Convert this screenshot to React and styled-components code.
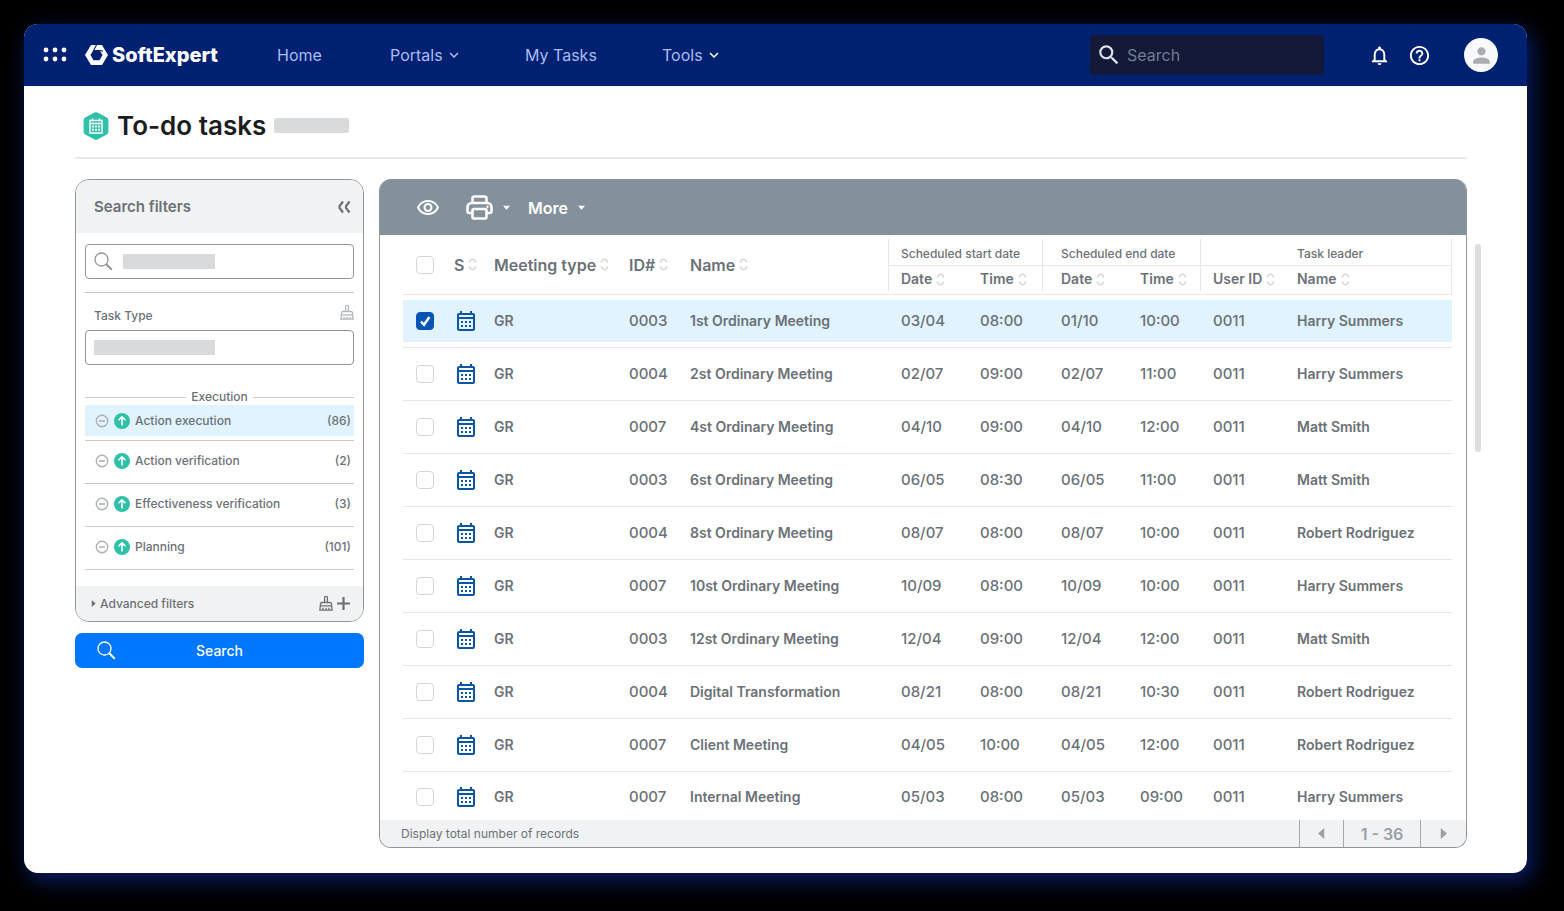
import React from "react";
import styled, { createGlobalStyle, css } from "styled-components";
import {
  MdOutlineCalendarMonth,
  MdOutlineNotifications,
  MdHelpOutline,
  MdSearch,
  MdKeyboardArrowDown,
  MdPerson,
  MdOutlineVisibility,
} from "react-icons/md";

const c = {
  navy: "#002072",
  text: "#6b7177",
  line: "#e6e7e9",
  border: "#8f959b",
  pale: "#f1f2f3",
  select: "#e1f3fe",
  green: "#2fc1a7",
  bar: "#d8dadc",
};

const Global = createGlobalStyle`
  *, *::before, *::after { box-sizing: border-box; }
  body { margin: 0; background: #000; color: ${c.text}; font-family: Inter, "Liberation Sans", sans-serif; }
  button, input { font: inherit; color: inherit; }
  button { border: 0; background: none; padding: 0; cursor: pointer; }
  svg { display: block; flex: none; }
`;

const Window = styled.div`
  margin: 24px 37px 37px 24px;
  background: #fff;
  border-radius: 14px;
  box-shadow: 5px 7px 20px 2px #091a5c;
`;

const TopBar = styled.header`
  display: flex;
  align-items: center;
  height: 62px;
  padding: 0 29px 0 19px;
  border-radius: 14px 14px 0 0;
  background: ${c.navy};
  color: #fff;
`;

const Brand = styled.a`
  display: flex;
  align-items: center;
  gap: 4px;
  width: 192px;
  margin-left: 18px;
  color: #fff;
  font-size: 20px;
  font-weight: 800;
  line-height: 24px;
  text-decoration: none;
`;

const Nav = styled.nav`
  display: grid;
  grid-template-columns: 113px 135px 137px auto;
`;

const NavLink = styled.a`
  display: flex;
  align-items: center;
  gap: 2px;
  color: #a9bdf0;
  font-size: 16px;
  line-height: 20px;
  text-decoration: none;
`;

const TopSearch = styled.label`
  display: flex;
  align-items: center;
  gap: 3px;
  width: 234px;
  height: 40px;
  margin-left: auto;
  padding-left: 6px;
  border-radius: 4px;
  background: #121a38;
  color: #dfe3f0;
`;

const TopSearchInput = styled.input`
  width: 100%;
  min-width: 0;
  border: 0;
  outline: 0;
  background: none;
  font-size: 16px;
  &::placeholder { color: #737a94; opacity: 1; }
`;

const TopActions = styled.div`
  display: flex;
  align-items: center;
  gap: 17px;
  margin-left: 44px;
`;

const Avatar = styled.button`
  display: grid;
  place-items: center;
  width: 34px;
  height: 34px;
  margin-left: 16px;
  border-radius: 50%;
  background: #f7f9fd;
  color: #a9adb1;
`;

const Content = styled.main`
  padding: 0 46px 25px 51px;
`;

const PageHead = styled.div`
  display: flex;
  align-items: center;
  gap: 8px;
  height: 73px;
  margin-right: 14px;
  padding: 8px 0 0 8px;
  border-bottom: 2px solid #e8e9ea;
`;

const Title = styled.h1`
  margin: 0;
  color: #1b1c1e;
  font-size: 26px;
  font-weight: 600;
  line-height: 32px;
`;

const TitleBar = styled.span`
  width: 75px;
  height: 15px;
  border-radius: 2px;
  background: ${c.bar};
`;

const Columns = styled.div`
  display: flex;
  align-items: flex-start;
  padding-top: 20px;
`;

const Sidebar = styled.aside`
  flex: none;
  width: 289px;
  margin-right: 15px;
`;

const Filters = styled.section`
  overflow: hidden;
  border: 1px solid ${c.border};
  border-radius: 14px;
`;

const FiltersHead = styled.div`
  display: flex;
  align-items: center;
  justify-content: space-between;
  height: 53px;
  padding: 0 12px 0 18px;
  background: ${c.pale};
`;

const FiltersTitle = styled.h2`
  margin: 0;
  font-size: 15px;
  font-weight: 600;
  line-height: 20px;
`;

const FiltersBody = styled.div`
  padding: 11px 9px 16px;
`;

const Field = styled.div`
  display: flex;
  align-items: center;
  gap: 10px;
  height: 35px;
  padding: 0 8px;
  border: 1px solid ${c.border};
  border-radius: 4px;
`;

const FieldInput = styled.input`
  flex: 1;
  min-width: 0;
  height: 24px;
  border: 0;
  outline: 0;
  background: linear-gradient(${c.bar}, ${c.bar}) left center / ${(p) => p.$bar}px 15px no-repeat;
`;

const Rule = styled.hr`
  height: 1px;
  margin: 13px 0 12px;
  border: 0;
  background: #c9ccce;
`;

const LabelRow = styled.div`
  display: flex;
  align-items: flex-start;
  justify-content: space-between;
  height: 25px;
  padding-left: 9px;
  color: ${c.text};
  font-size: 12px;
  font-weight: 500;
  line-height: 22px;
`;

const GroupTitle = styled.h3`
  display: flex;
  align-items: center;
  gap: 5px;
  margin: 24px 0 0;
  font-size: 12px;
  font-weight: 500;
  line-height: 16px;
  &::before, &::after { content: ""; flex: 1; height: 1px; background: #c9ccce; }
`;

const TaskList = styled.ul`
  margin: 0;
  padding: 0;
  list-style: none;
`;

const TaskItem = styled.li`
  height: 43px;
  padding: 4px 0 0;
  border-bottom: 1px solid #c9ccce;
  &:first-child { height: 36px; padding: 0; }
`;

const TaskButton = styled.button`
  display: flex;
  align-items: center;
  gap: 5px;
  width: 100%;
  height: 31px;
  padding: 0 3px 0 10px;
  background: ${(p) => (p.$active ? c.select : "transparent")};
  font-size: 12px;
  font-weight: 500;
  text-align: left;
`;

const Count = styled.span`
  margin-left: auto;
`;

const FiltersFoot = styled.div`
  display: flex;
  align-items: center;
  gap: 4px;
  height: 35px;
  padding: 0 13px 0 14px;
  background: ${c.pale};
`;

const Advanced = styled.button`
  display: flex;
  align-items: center;
  gap: 3px;
  margin-right: auto;
  font-size: 12px;
  font-weight: 500;
`;

const SearchButton = styled.button`
  display: grid;
  grid-template-columns: 1fr auto 1fr;
  align-items: center;
  width: 100%;
  height: 35px;
  margin-top: 11px;
  padding: 0 22px;
  border-radius: 7px;
  background: #0077ff;
  color: #fff;
  font-size: 14px;
  font-weight: 500;
`;

const Panel = styled.section`
  flex: 1;
  min-width: 0;
  overflow: hidden;
  border: 1px solid ${c.border};
  border-top: 0;
  border-radius: 12px;
`;

const Toolbar = styled.div`
  display: flex;
  align-items: center;
  height: 56px;
  padding: 1px 0 0 36px;
  background: #84909b;
  color: #fff;
`;

const Tool = styled.button`
  display: flex;
  align-items: center;
  gap: 10px;
  margin-right: ${(p) => p.$after || 0}px;
  font-size: 16px;
  font-weight: 600;
`;

const TableWrap = styled.div`
  overflow-x: auto;
  padding: 4px 14px 0 23px;
`;

const Table = styled.table`
  width: 100%;
  min-width: 960px;
  table-layout: fixed;
  border-collapse: separate;
  border-spacing: 0;
`;

const vline = css`
  background: linear-gradient(${c.line}, ${c.line}) left top / 1px ${(p) => (p.$group ? "100%" : "calc(100% - 3px)")} no-repeat;
`;

const HeadCell = styled.th`
  height: ${(p) => (p.$group ? 27 : 29)}px;
  padding: ${(p) => (p.$group ? 3 : 0)}px 0 ${(p) => (p.$group ? 0 : p.$main ? 4 : 2)}px ${(p) => p.$pad || 0}px;
  border-bottom: 1px solid ${(p) => (p.$group ? c.line : "#eee2e2")};
  font-size: ${(p) => (p.$group ? 12 : p.$main ? 16 : 14)}px;
  font-weight: ${(p) => (p.$group ? 500 : 600)};
  line-height: 20px;
  text-align: left;
  white-space: nowrap;
  ${(p) => p.$line && vline}
  ${(p) => p.$end && css`border-right: 1px solid ${c.line};`}
`;

const HeadLabel = styled.span`
  display: flex;
  align-items: center;
  gap: 4px;
`;

const Row = styled.tr`
  height: 53px;
  background: ${(p) =>
    p.$selected ? `linear-gradient(${c.select}, ${c.select}) left 5px / 100% 42px no-repeat` : "none"};
`;

const Cell = styled.td`
  padding: 0 0 1px ${(p) => p.$pad || 0}px;
  border-bottom: 1px solid ${c.line};
  font-size: ${(p) => (p.$num ? 15 : 14)}px;
  font-weight: ${(p) => (p.$num ? 500 : 600)};
  line-height: 20px;
  white-space: nowrap;
  ${Row}:last-child & {
    height: 48px;
    padding-top: 2px;
    padding-bottom: 0;
    border-bottom: 0;
  }
  ${Row}:last-child & { height: auto; }
`;

const BodyRows = styled.tbody`
  ${Row}:last-child { height: 48px; }
`;

const Check = styled.input`
  appearance: none;
  display: block;
  width: 18px;
  height: 18px;
  margin: 0;
  border: 1px solid #d3d5d8;
  border-radius: 4px;
  background: #fff;
  &:checked {
    border-color: #0353b4;
    background: #0353b4
      url("data:image/svg+xml,%3Csvg xmlns='http://www.w3.org/2000/svg' viewBox='0 0 16 16' fill='none' stroke='white' stroke-width='2.4'%3E%3Cpath d='M4 8.5l3 3.3L12.4 4'/%3E%3C/svg%3E")
      center / 16px no-repeat;
  }
`;

const PanelFoot = styled.footer`
  display: flex;
  align-items: center;
  height: 27px;
  padding-left: 21px;
  background: ${c.pale};
  font-size: 12px;
  line-height: 16px;
`;

const Pager = styled.div`
  display: grid;
  grid-template-columns: 44px 77px 46px;
  height: 100%;
  margin-left: auto;
  color: #9aa0a5;
  font-size: 16px;
  font-weight: 600;
  & > * {
    display: grid;
    place-items: center;
    border-left: 1px solid #a3a8ad;
  }
`;

const ScrollThumb = styled.div`
  width: 6px;
  height: 208px;
  margin: 65px 0 0 8px;
  border-radius: 3px;
  background: #dcdddf;
`;

const AppsIcon = () => (
  <svg width="24" height="16" viewBox="0 0 24 16" fill="#fff">
    {[3, 12, 21].map((x) => [3, 12].map((y) => <circle key={x + "-" + y} cx={x} cy={y} r="2.4" />))}
  </svg>
);

const LogoIcon = () => (
  <svg width="23" height="20" viewBox="0 0 23 20">
    <path fill="#fff" fillRule="evenodd" d="M6 0h11l6 10-6 10H6L0 10zM8.500 5 5.500 10l3 5.300h6l3-5.300-3-5z" />
    <path stroke={c.navy} strokeWidth="1.100" d="M11.500 0 8.500 5.500M14.500 5.200l3.500 1" />
  </svg>
);

const HexCalendar = () => (
  <svg width="26" height="28" viewBox="0 0 26 28">
    <path fill={c.green} d="M11.500.6a3 3 0 0 1 3 0l9.300 5A3 3 0 0 1 25.400 8v12a3 3 0 0 1-1.600 2.500l-9.300 5a3 3 0 0 1-3 0l-9.300-5A3 3 0 0 1 .6 20V8a3 3 0 0 1 1.600-2.500z" />
    <path fill="none" stroke="#fff" strokeWidth="1.500" d="M7 8.500h12v12.500H7zM7 11.500h12M9.500 6.500v2M16.500 6.500v2" />
    <path stroke="#fff" strokeWidth="2" strokeDasharray="2 1" d="M9 14.500h8M9 17.800h8" />
  </svg>
);

const Caret = ({ size = 8, dir = "down" }) => {
  const turn = { down: 0, left: 90, right: -90 }[dir];
  return (
    <svg width={size} height={size} viewBox="0 0 8 8" fill="currentColor">
      <path d="M0 2h8L4 6.500z" transform={`rotate(${turn} 4 4)`} />
    </svg>
  );
};

const PrinterIcon = () => (
  <svg width="27" height="25" viewBox="0 0 27 25" fill="none" stroke="currentColor" strokeWidth="2.600">
    <path d="M6.500 8V3.500a2 2 0 0 1 2-2h10a2 2 0 0 1 2 2V8M6.500 18H3.500a2 2 0 0 1-2-2v-4a4 4 0 0 1 4-4h16a4 4 0 0 1 4 4v4a2 2 0 0 1-2 2h-3" />
    <rect x="6.500" y="14" width="14" height="9.500" rx="1.500" />
    <circle cx="21.500" cy="11.800" r="1.200" fill="currentColor" stroke="none" />
  </svg>
);

const SortIcon = () => (
  <svg width="9" height="13" viewBox="0 0 9 13" fill="none" stroke="#d3d5d8" strokeWidth="1.400">
    <path d="M1 4.500 2.500 2.200Q4.500.4 6.500 2.200L8 4.500M1 8.500l1.500 2.300q2 1.800 4 0L8 8.500" />
  </svg>
);

const LensIcon = ({ color }) => (
  <svg width="19" height="19" viewBox="0 0 19 19" fill="none" stroke={color}>
    <circle cx="7.500" cy="7.500" r="6.500" strokeWidth="1.300" />
    <path strokeWidth="2" d="m12.200 12.200 5.600 5.600" />
  </svg>
);

const BrushIcon = ({ color }) => (
  <svg width="14" height="15" viewBox="0 0 14 15" fill="none" stroke={color} strokeWidth="1.300">
    <path d="M5.600 6.500V1.500a1 1 0 0 1 2.800 0v5M1.500 9.800V8A1.500 1.500 0 0 1 3 6.500h8A1.500 1.500 0 0 1 12.500 8v1.800M1.300 9.800h11.400l.4 4.400H.9zM4 14v-2.200M7 14v-2.200M10 14v-2.200" />
  </svg>
);

const CollapseIcon = () => (
  <svg width="14" height="14" viewBox="0 0 14 14" fill="none" stroke="currentColor" strokeWidth="2.200">
    <path d="M6 1.500 2.500 6.200v1.600L6 12.500M12.500 1.500 9 6.200v1.600l3.500 4.700" />
  </svg>
);

const PlusIcon = () => (
  <svg width="13" height="13" viewBox="0 0 13 13" stroke="currentColor" strokeWidth="2.200">
    <path d="M6.500 0v13M0 6.500h13" />
  </svg>
);

const MinusCircle = () => (
  <svg width="14" height="14" viewBox="0 0 14 14" fill="none" stroke="#abb0b4">
    <circle cx="7" cy="7" r="5.700" strokeWidth="1.400" />
    <path strokeWidth="1.600" d="M4 7h6" />
  </svg>
);

const UpCircle = () => (
  <svg width="16" height="16" viewBox="0 0 16 16" fill="none">
    <circle cx="8" cy="8" r="8" fill={c.green} />
    <path stroke="#fff" strokeWidth="1.600" d="M8 12.500V4M4.500 7.300 8 3.900l3.500 3.400" />
  </svg>
);

const groups = [
  { name: "Action execution", count: 86 },
  { name: "Action verification", count: 2 },
  { name: "Effectiveness verification", count: 3 },
  { name: "Planning", count: 101 },
];

const meetings = [
  ["0003", "1st Ordinary Meeting", "03/04", "08:00", "01/10", "10:00", "Harry Summers"],
  ["0004", "2st Ordinary Meeting", "02/07", "09:00", "02/07", "11:00", "Harry Summers"],
  ["0007", "4st Ordinary Meeting", "04/10", "09:00", "04/10", "12:00", "Matt Smith"],
  ["0003", "6st Ordinary Meeting", "06/05", "08:30", "06/05", "11:00", "Matt Smith"],
  ["0004", "8st Ordinary Meeting", "08/07", "08:00", "08/07", "10:00", "Robert Rodriguez"],
  ["0007", "10st Ordinary Meeting", "10/09", "08:00", "10/09", "10:00", "Harry Summers"],
  ["0003", "12st Ordinary Meeting", "12/04", "09:00", "12/04", "12:00", "Matt Smith"],
  ["0004", "Digital Transformation", "08/21", "08:00", "08/21", "10:30", "Robert Rodriguez"],
  ["0007", "Client Meeting", "04/05", "10:00", "04/05", "12:00", "Robert Rodriguez"],
  ["0007", "Internal Meeting", "05/03", "08:00", "05/03", "09:00", "Harry Summers"],
];

const columnWidths = [51, 40, 135, 61, undefined, 92, 62, 98, 60, 97, 155];

const SortHead = ({ children, ...rest }) => (
  <HeadCell scope="col" {...rest}>
    <HeadLabel>
      {children}
      <SortIcon />
    </HeadLabel>
  </HeadCell>
);

function TopNavigation() {
  return (
    <TopBar>
      <button aria-label="Applications"><AppsIcon /></button>
      <Brand href="#"><LogoIcon />SoftExpert</Brand>
      <Nav>
        <NavLink href="#">Home</NavLink>
        <NavLink href="#">Portals<MdKeyboardArrowDown size={18} /></NavLink>
        <NavLink href="#">My Tasks</NavLink>
        <NavLink href="#">Tools<MdKeyboardArrowDown size={18} color="#fff" /></NavLink>
      </Nav>
      <TopSearch>
        <MdSearch size={26} />
        <TopSearchInput type="search" placeholder="Search" aria-label="Search" />
      </TopSearch>
      <TopActions>
        <button aria-label="Notifications"><MdOutlineNotifications size={23} /></button>
        <button aria-label="Help"><MdHelpOutline size={23} /></button>
        <Avatar aria-label="Account"><MdPerson size={25} /></Avatar>
      </TopActions>
    </TopBar>
  );
}

function SearchFilters() {
  return (
    <Sidebar>
      <Filters>
        <FiltersHead>
          <FiltersTitle>Search filters</FiltersTitle>
          <button aria-label="Collapse filters"><CollapseIcon /></button>
        </FiltersHead>
        <FiltersBody>
          <Field>
            <LensIcon color="#8f959b" />
            <FieldInput $bar={92} aria-label="Filter text" />
          </Field>
          <Rule />
          <LabelRow>
            <label htmlFor="task-type">Task Type</label>
            <button aria-label="Clear task type"><BrushIcon color="#b3b7bb" /></button>
          </LabelRow>
          <Field>
            <FieldInput $bar={121} id="task-type" />
          </Field>
          <GroupTitle>Execution</GroupTitle>
          <TaskList>
            {groups.map((g, i) => (
              <TaskItem key={g.name}>
                <TaskButton $active={i === 0}>
                  <MinusCircle />
                  <UpCircle />
                  {g.name}
                  <Count>({g.count})</Count>
                </TaskButton>
              </TaskItem>
            ))}
          </TaskList>
        </FiltersBody>
        <FiltersFoot>
          <Advanced><Caret size={7} dir="right" />Advanced filters</Advanced>
          <button aria-label="Clear filters"><BrushIcon color={c.text} /></button>
          <button aria-label="Add filter"><PlusIcon /></button>
        </FiltersFoot>
      </Filters>
      <SearchButton><LensIcon color="#fff" />Search</SearchButton>
    </Sidebar>
  );
}

function MeetingTable() {
  return (
    <Table>
      <colgroup>
        {columnWidths.map((w, i) => <col key={i} style={{ width: w }} />)}
      </colgroup>
      <thead>
        <tr>
          <HeadCell rowSpan={2} $main $pad={13}><Check type="checkbox" aria-label="Select all" /></HeadCell>
          <SortHead rowSpan={2} $main>S</SortHead>
          <SortHead rowSpan={2} $main>Meeting type</SortHead>
          <SortHead rowSpan={2} $main>ID#</SortHead>
          <SortHead rowSpan={2} $main>Name</SortHead>
          <HeadCell colSpan={2} $group $line $pad={13}>Scheduled start date</HeadCell>
          <HeadCell colSpan={2} $group $line $pad={19}>Scheduled end date</HeadCell>
          <HeadCell colSpan={2} $group $line $end $pad={97}>Task leader</HeadCell>
        </tr>
        <tr>
          <SortHead $line $pad={13}>Date</SortHead>
          <SortHead>Time</SortHead>
          <SortHead $line $pad={19}>Date</SortHead>
          <SortHead>Time</SortHead>
          <SortHead $line $pad={13}>User ID</SortHead>
          <SortHead $end>Name</SortHead>
        </tr>
      </thead>
      <BodyRows>
        {meetings.map(([id, name, startDate, startTime, endDate, endTime, leader], i) => (
          <Row key={name} $selected={i === 0}>
            <Cell $pad={13}><Check type="checkbox" defaultChecked={i === 0} aria-label={name} /></Cell>
            <Cell><MdOutlineCalendarMonth size={24} color="#0b55a5" /></Cell>
            <Cell>GR</Cell>
            <Cell $num>{id}</Cell>
            <Cell>{name}</Cell>
            <Cell $num $pad={13}>{startDate}</Cell>
            <Cell $num>{startTime}</Cell>
            <Cell $num $pad={19}>{endDate}</Cell>
            <Cell $num>{endTime}</Cell>
            <Cell $num $pad={13}>0011</Cell>
            <Cell>{leader}</Cell>
          </Row>
        ))}
      </BodyRows>
    </Table>
  );
}

export default function App() {
  return (
    <>
      <Global />
      <Window>
        <TopNavigation />
        <Content>
          <PageHead>
            <HexCalendar />
            <Title>To-do tasks</Title>
            <TitleBar />
          </PageHead>
          <Columns>
            <SearchFilters />
            <Panel>
              <Toolbar>
                <Tool $after={26} aria-label="View"><MdOutlineVisibility size={24} /></Tool>
                <Tool $after={18} aria-label="Print"><PrinterIcon /><Caret size={7} /></Tool>
                <Tool>More <Caret size={7} /></Tool>
              </Toolbar>
              <TableWrap><MeetingTable /></TableWrap>
              <PanelFoot>
                Display total number of records
                <Pager>
                  <button aria-label="Previous page"><Caret size={11} dir="left" /></button>
                  <span>1 - 36</span>
                  <button aria-label="Next page"><Caret size={11} dir="right" /></button>
                </Pager>
              </PanelFoot>
            </Panel>
            <ScrollThumb />
          </Columns>
        </Content>
      </Window>
    </>
  );
}
